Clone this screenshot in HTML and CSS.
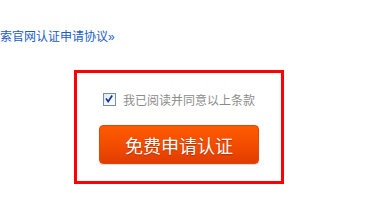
FILE: index.html
```html
<!DOCTYPE html>
<html lang="zh-CN">
<head>
    <meta charset="UTF-8">
    <title>官网认证申请</title>
    <link rel="stylesheet" href="styles.css">
</head>
<body>

    <p class="agreement-link"><a href="#">索官网认证申请协议»</a></p>

    <div class="apply-box">
        <label class="agree">
            <span class="check-box">
                <svg viewBox="0 0 12 12" width="12" height="12">
                    <path d="M3 6.2 5 9 9.3 2.6" fill="none" stroke="#1c2f9c" stroke-width="2" stroke-linecap="square"></path>
                </svg>
            </span>
            <span class="agree-text">我已阅读并同意以上条款</span>
        </label>
        <button class="apply-btn">免费申请认证</button>
    </div>

</body>
</html>
```

FILE: styles.css
```css
body {
    margin: 0;
    font-family: "Liberation Sans", "Noto Sans CJK SC", sans-serif;
    background-color: #ffffff;
}

.agreement-link {
    margin: 0;
    padding-top: 29px;
    font-size: 12px;
    line-height: 16px;
}

.agreement-link a {
    color: #1a5cc8;
    text-decoration: none;
}

/* red frame round the apply area */
.apply-box {
    margin: 25px 0 0 74px;
    width: 204px;
    height: 89px;
    padding-top: 19px;
    border: 3px solid #ff0000;
    display: flex;
    flex-direction: column;
    align-items: center;
}

.agree {
    display: flex;
    align-items: center;
    gap: 7px;
    height: 14px;
    font-size: 12px;
    color: #8c8c8c;
}

.check-box {
    width: 11px;
    height: 11px;
    border: 1px solid #6f8fb3;
    background: linear-gradient(135deg, #dfe8f2, #ffffff);
    display: flex;
    align-items: center;
    justify-content: center;
}

.check-box svg {
    width: 10px;
    height: 10px;
}

.apply-btn {
    margin-top: 19px;
    width: 160px;
    height: 39px;
    border: 1px solid #e24800;
    border-radius: 4px;
    background: linear-gradient(#ff5a00, #f04a00 60%, #e03c00);
    color: #ffffff;
    font-family: "Noto Sans CJK SC", sans-serif;
    font-size: 18px;
    letter-spacing: 0;
    text-shadow: 0 1px 1px rgba(120, 30, 0, 0.5);
    box-shadow: 0 1px 1px rgba(0, 0, 0, 0.15);
    cursor: pointer;
}
```
